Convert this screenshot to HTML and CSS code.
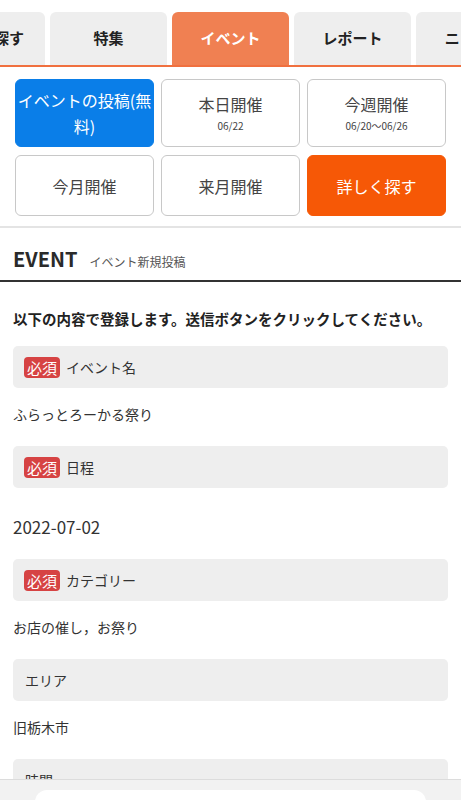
FILE: index.html
```html
<!DOCTYPE html>
<html lang="ja">
<head>
<meta charset="utf-8">
<title>イベント新規投稿</title>
<link rel="stylesheet" href="styles.css">
</head>
<body>
<nav class="tabs">
  <div class="tab">詳しく探す</div>
  <div class="tab">特集</div>
  <div class="tab tab-active">イベント</div>
  <div class="tab">レポート</div>
  <div class="tab">ニュース</div>
</nav>

<div class="quick">
  <a class="qbtn qbtn-blue">イベントの投稿(無料)</a>
  <a class="qbtn"><span class="qmain">本日開催</span><span class="qdate">06/22</span></a>
  <a class="qbtn"><span class="qmain">今週開催</span><span class="qdate">06/20～06/26</span></a>
  <a class="qbtn">今月開催</a>
  <a class="qbtn">来月開催</a>
  <a class="qbtn qbtn-orange">詳しく探す</a>
</div>

<div class="sep"></div>

<h1 class="heading"><span class="heading-en">EVENT</span><span class="heading-ja">イベント新規投稿</span></h1>

<main class="form">
  <p class="lead">以下の内容で登録します。送信ボタンをクリックしてください。</p>

  <div class="label"><span class="req">必須</span>イベント名</div>
  <div class="value">ふらっとろーかる祭り</div>

  <div class="label"><span class="req">必須</span>日程</div>
  <div class="value value-date">2022-07-02</div>

  <div class="label"><span class="req">必須</span>カテゴリー</div>
  <div class="value">お店の催し，お祭り</div>

  <div class="label label-plain">エリア</div>
  <div class="value">旧栃木市</div>

  <div class="label label-plain">時間</div>
  <div class="value">&nbsp;</div>
</main>

<div class="toolbar"><div class="toolbar-pill"></div></div>
</body>
</html>
```

FILE: styles.css
```css
* { box-sizing: border-box; }

html, body {
  margin: 0;
  padding: 0;
  background: #ffffff;
  font-family: "Noto Sans CJK JP", "Noto Sans", sans-serif;
  color: #333333;
  overflow: hidden;
}

.tabs {
  display: flex;
  gap: 5px;
  margin-top: 12px;
  margin-left: -72px;
  border-bottom: 2px solid #f0703f;
  white-space: nowrap;
}

.tab {
  flex: 0 0 117px;
  height: 53px;
  border-radius: 6px 6px 0 0;
  background: #eeeeee;
  color: #222222;
  font-weight: bold;
  font-size: 15px;
  line-height: 20px;
  padding-bottom: 2px;
  display: flex;
  align-items: center;
  justify-content: center;
}

.tab-active {
  background: #f08052;
  color: #ffffff;
}

.quick {
  display: grid;
  grid-template-columns: repeat(3, 1fr);
  grid-template-rows: 68px 61px;
  column-gap: 7px;
  row-gap: 8px;
  padding: 12px 15px 0 15px;
}

.qbtn {
  border: 1px solid #c8c8c8;
  border-radius: 6px;
  background: #ffffff;
  color: #444444;
  font-size: 16px;
  line-height: 22px;
  display: flex;
  flex-direction: column;
  align-items: center;
  justify-content: center;
  text-align: center;
  padding: 0 2px;
}

.qmain {
  display: block;
  line-height: 22px;
}

.qdate {
  display: block;
  font-size: 10px;
  line-height: 14px;
  margin-top: 4px;
  color: #444444;
}

.qbtn-blue {
  display: block;
  background: #0a7ee8;
  border-color: #0a7ee8;
  color: #ffffff;
  line-height: 26px;
  padding: 7px 0 0 0;
  line-break: anywhere;
  word-break: break-all;
}

.qbtn-orange {
  background: #f65806;
  border-color: #f65806;
  color: #ffffff;
}

.sep {
  height: 2px;
  background: #e4e4e4;
  margin-top: 10px;
}

.heading {
  margin: 0;
  height: 54px;
  padding: 19px 13px 0 13px;
  border-bottom: 2px solid #333333;
  display: flex;
  align-items: baseline;
  gap: 12px;
  font-weight: normal;
}

.heading-en {
  font-family: "Noto Sans CJK JP", "Noto Sans", sans-serif;
  font-weight: bold;
  font-size: 20px;
  line-height: 24px;
  color: #2a2a2a;
}

.heading-ja {
  font-size: 12px;
  color: #555555;
}

.form {
  padding: 0 13px 0 13px;
}

.lead {
  margin: 26px 0 16px 0;
  font-size: 14.5px;
  line-height: 22px;
  font-weight: bold;
  color: #222222;
  white-space: nowrap;
}

.label {
  height: 42px;
  background: #eeeeee;
  border-radius: 5px;
  padding: 0 11px;
  display: flex;
  align-items: center;
  gap: 6px;
  font-size: 14px;
  color: #333333;
}

.label-plain {
  padding-left: 12px;
}

.req {
  display: inline-block;
  background: #d64343;
  color: #ffffff;
  border-radius: 4px;
  font-size: 15px;
  line-height: 21px;
  padding: 0 3px;
}

.value {
  padding: 15px 0 21px 0;
  font-size: 14px;
  line-height: 22px;
  color: #333333;
}

.value-date {
  font-size: 17px;
  padding: 28px 0 21px 0;
}

.toolbar {
  position: fixed;
  left: 0;
  right: 0;
  bottom: 0;
  height: 21px;
  background: #f2f2f2;
  border-top: 1px solid #dcdcdc;
  padding: 10px 35px 0 35px;
}

.toolbar-pill {
  height: 12px;
  background: #ffffff;
  border-radius: 12px 12px 0 0;
}
```
